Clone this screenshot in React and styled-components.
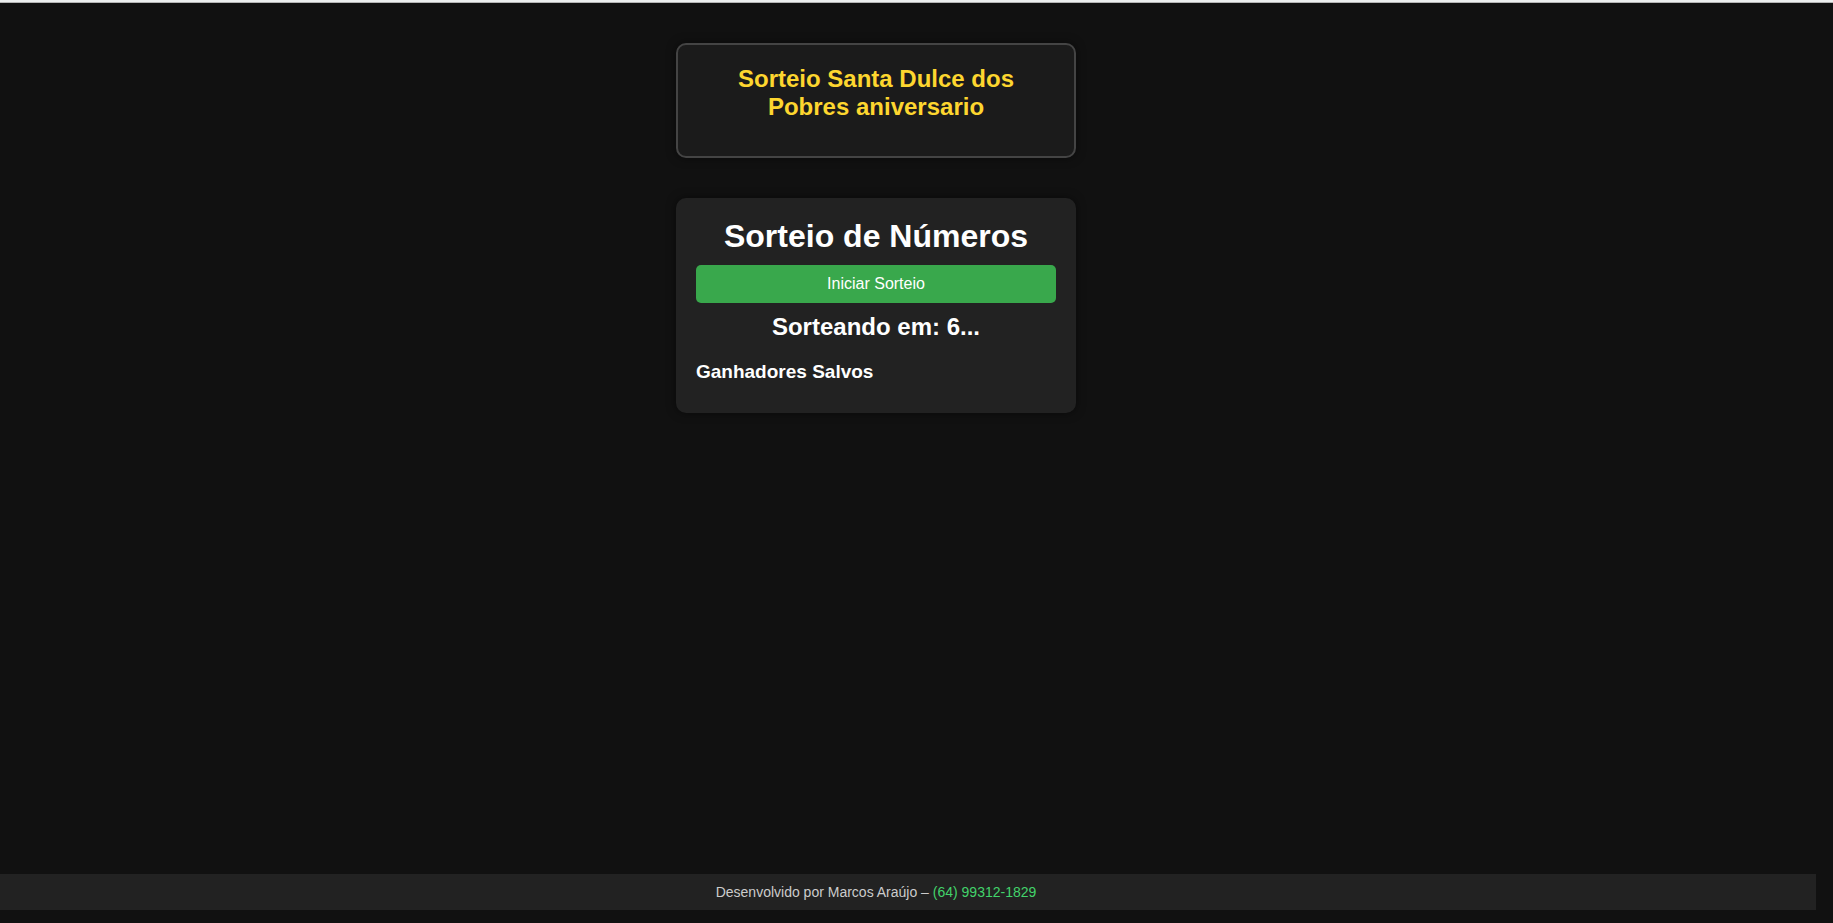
import { useState } from "react";
import styled, { createGlobalStyle } from "styled-components";

const App = () => {
  const [seconds, setSeconds] = useState(6);

  return (
    <PageWrapper>
      <GlobalStyle />
      <MainContainer>
        <TitleBox>
          <TitleText>Sorteio Santa Dulce dos Pobres aniversario</TitleText>
        </TitleBox>
        <DrawCard>
          <HeaderOne>Sorteio de Números</HeaderOne>
          <StartButton type="button" onClick={() => setSeconds(10)}>
            Iniciar Sorteio
          </StartButton>
          <Countdown>Sorteando em: {seconds}...</Countdown>
          <WinnersTitle>Ganhadores Salvos</WinnersTitle>
        </DrawCard>
      </MainContainer>
      <Footer>
        Desenvolvido por Marcos Araújo –{" "}
        <PhoneLink href="tel:+5564993121829">(64) 99312-1829</PhoneLink>
      </Footer>
    </PageWrapper>
  );
};

const GlobalStyle = createGlobalStyle`
  * {
    box-sizing: border-box;
  }

  body {
    margin: 0;
    background-color: #111;
    color: #fff;
    font-family: "Liberation Sans", Arial, sans-serif;
  }

  h1,
  h2,
  h3 {
    margin: 0;
  }
`;

const PageWrapper = styled.div`
  min-height: 100vh;
  padding: 1px 0 13px;
  display: flex;
  flex-direction: column;
  justify-content: space-between;
  border-top: 2px solid #eceeee;
  box-shadow: inset 0 1px 0 #b4b4b4;
`;

const MainContainer = styled.main`
  padding: 40px 81px 40px 0;
  display: flex;
  flex-direction: column;
  align-items: center;
  gap: 40px;
`;

const TitleBox = styled.header`
  width: 100%;
  max-width: 400px;
  padding: 20px 20px 35px;
  background-color: #1b1b1b;
  border: 2px solid #444;
  border-radius: 10px;
  box-shadow: 0 0 10px rgba(0, 0, 0, 0.5);
`;

const TitleText = styled.h2`
  color: #fdd62f;
  font-size: 24px;
  line-height: 28px;
  text-align: center;
`;

const DrawCard = styled.section`
  width: 100%;
  max-width: 400px;
  padding: 20px 20px 30px;
  display: flex;
  flex-direction: column;
  gap: 10px;
  background-color: #222;
  border-radius: 10px;
  box-shadow: 0 0 10px rgba(0, 0, 0, 0.5);
`;

const HeaderOne = styled.h1`
  font-size: 32px;
  line-height: 37px;
  text-align: center;
`;

const StartButton = styled.button`
  width: 100%;
  padding: 10px;
  background-color: #39a84c;
  border: none;
  border-radius: 5px;
  color: #fff;
  font-family: inherit;
  font-size: 16px;
  line-height: 18px;
  cursor: pointer;

  &:hover {
    background-color: #2f9141;
  }
`;

const Countdown = styled.h2`
  font-size: 24px;
  line-height: 28px;
  text-align: center;
`;

const WinnersTitle = styled.h3`
  padding-top: 10px;
  font-size: 19px;
  line-height: 22px;
`;

const Footer = styled.footer`
  margin-right: 17px;
  padding: 10px 64px 10px 0;
  background-color: #222;
  color: #ccc;
  font-size: 14px;
  line-height: 16px;
  text-align: center;
`;

const PhoneLink = styled.a`
  color: #42d36b;
  text-decoration: none;
`;

export default App;
